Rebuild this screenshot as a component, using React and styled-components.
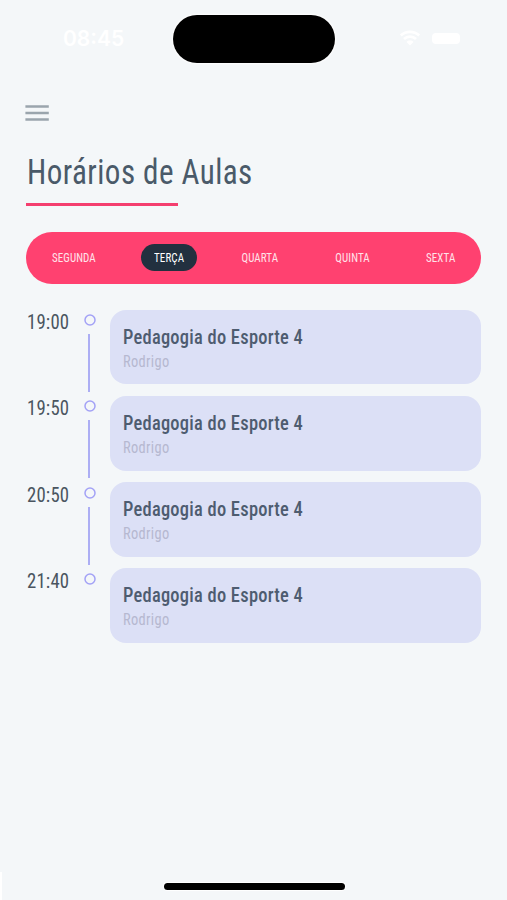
import React, { useState } from 'react';
import styled, { createGlobalStyle } from 'styled-components';

const GlobalStyle = createGlobalStyle`
  * {
    box-sizing: border-box;
  }

  body {
    margin: 0;
    background: #f4f7f9;
    font-family: Roboto, 'Liberation Sans', sans-serif;
    font-stretch: 75%;
  }
`;

const Screen = styled.div`
  position: relative;
  display: flex;
  flex-direction: column;
  height: 900px;
  overflow: hidden;
  background: #f4f7f9;
`;

const StatusBar = styled.div`
  display: grid;
  grid-template-columns: 173px 162px 1fr;
  height: 48px;
  margin-top: 15px;
  color: #ffffff;
`;

const Clock = styled.span`
  padding: 11px 0 0 63px;
  font-family: Inter, sans-serif;
  font-stretch: 100%;
  font-size: 21px;
  font-weight: 600;
  line-height: 26px;
`;

const Island = styled.div`
  border-radius: 24px;
  background: #000000;
  box-shadow: 0 0 2px 1px #ffffff;
`;

const StatusIcons = styled.div`
  display: flex;
  align-items: flex-start;
  gap: 12px;
  padding: 15px 0 0 65px;
`;

const Battery = styled.div`
  width: 28px;
  height: 11px;
  margin-top: 3px;
  border-radius: 4px;
  background: #ffffff;
`;

const Content = styled.main`
  flex: 1;
  padding: 42px 26px 0;
`;

const MenuButton = styled.button`
  display: block;
  width: 24px;
  height: 17px;
  margin-left: -1px;
  padding: 0;
  border: 0;
  background: none;
  cursor: pointer;
`;

/* Squeezes the face a little more than its condensed width allows */
const Narrow = styled.span`
  display: inline-block;
  white-space: nowrap;
  letter-spacing: ${(props) => props.$spacing || 0}px;
  transform: scaleX(${(props) => props.$scale || 0.9});
  transform-origin: ${(props) => props.$origin || 'left'};
`;

const Title = styled.h1`
  margin: 28px 0 0 0.5px;
  font-size: 34.5px;
  font-weight: 430;
  line-height: 44px;
  color: #4a5a69;
`;

const TitleLine = styled.div`
  width: 152px;
  height: 3px;
  margin: 9px 0 0 0.4px;
  background: #f43f6f;
`;

const Days = styled.nav`
  display: flex;
  align-items: center;
  justify-content: space-between;
  height: 52.5px;
  margin: 25.5px 0 0 0.4px;
  padding: 0 13px 1px 13px;
  border-radius: 27px;
  background: #ff4170;
`;

const Day = styled.button`
  display: flex;
  align-items: center;
  justify-content: center;
  width: ${(props) => props.$width}px;
  height: 27.5px;
  padding: 0;
  border: 0;
  border-radius: 14px;
  background: ${(props) => (props.$active ? '#22303f' : 'transparent')};
  color: ${(props) => (props.$active ? '#ffffff' : '#ffe3ea')};
  font-family: inherit;
  font-stretch: inherit;
  font-size: 12.5px;
  font-weight: 430;
  cursor: pointer;
`;

const Schedule = styled.ul`
  display: flex;
  flex-direction: column;
  gap: 11.5px;
  margin: 25.5px 0 0;
  padding: 0;
  list-style: none;
`;

const Row = styled.li`
  display: grid;
  grid-template-columns: 58px 11.5px 1fr;
  grid-template-rows: 74.8px;
  height: 74.8px;
`;

const Time = styled.time`
  padding: 1.5px 0 0 0.5px;
  font-size: 19.5px;
  font-weight: 440;
  line-height: 24px;
  color: #4a5560;
`;

const Track = styled.div`
  display: flex;
  flex-direction: column;
  align-items: center;
  padding-top: 4.5px;
`;

const Dot = styled.svg`
  flex: none;
  display: block;
  width: 12px;
  height: 12px;
`;

const Connector = styled.span`
  flex: none;
  width: 2px;
  height: 58px;
  margin-top: 8px;
  margin-right: 1px;
  background: #acaef4;
`;

const Card = styled.article`
  margin-left: 14.5px;
  padding: 14px 13px 0 12.5px;
  border-radius: 16px;
  background: #dce0f6;
`;

const Subject = styled.h2`
  margin: 0;
  font-size: 20.5px;
  font-weight: 480;
  line-height: 26px;
  color: #4e5c70;
`;

const Teacher = styled.p`
  margin: 1px 0 0;
  font-size: 16px;
  font-weight: 400;
  line-height: 22px;
  color: #b6b8d0;
`;

const HomeIndicator = styled.div`
  align-self: center;
  width: 181px;
  height: 7px;
  margin: 0 0 10px 1px;
  border-radius: 4px;
  background: #000000;
  box-shadow: 0 0 1px 1px #ffffff;
`;

const EdgeMark = styled.span`
  position: absolute;
  left: 0;
  bottom: 0;
  width: 2px;
  height: 28px;
  background: #ffffff;
`;

const days = [
  { label: 'SEGUNDA', width: 69 },
  { label: 'TERÇA', width: 56 },
  { label: 'QUARTA', width: 61 },
  { label: 'QUINTA', width: 58 },
  { label: 'SEXTA', width: 54 },
];

const lessons = [
  { time: '19:00', subject: 'Pedagogia do Esporte 4', teacher: 'Rodrigo' },
  { time: '19:50', subject: 'Pedagogia do Esporte 4', teacher: 'Rodrigo' },
  { time: '20:50', subject: 'Pedagogia do Esporte 4', teacher: 'Rodrigo' },
  { time: '21:40', subject: 'Pedagogia do Esporte 4', teacher: 'Rodrigo' },
];

function WifiIcon() {
  return (
    <svg width="20" height="16" viewBox="0 0 20 16" fill="none">
      <path
        d="M.8 5.4C6 .6 14 .6 19.2 5.4M4 9c3.3-3.1 8.7-3.1 12 0"
        stroke="#fff"
        strokeWidth="2.7"
      />
      <path d="M10 15.6 6.5 11.9c1.9-1.8 5.1-1.8 7 0z" fill="#fff" />
    </svg>
  );
}

function MenuIcon() {
  return (
    <svg width="24" height="17" viewBox="0 0 24 17" display="block">
      <path
        d="M.4 1.5h23.4M.4 8h23.4M.4 14.5h23.4"
        stroke="#9aa5ad"
        strokeWidth="2.4"
      />
    </svg>
  );
}

function Lesson({ time, subject, teacher, last }) {
  return (
    <Row>
      <Time>
        <Narrow $spacing={0.2} $scale={0.96}>
          {time}
        </Narrow>
      </Time>
      <Track>
        <Dot viewBox="0 0 12 12">
          <circle
            cx="6"
            cy="6"
            r="5"
            fill="none"
            stroke="#a3a2f6"
            strokeWidth="1.5"
          />
        </Dot>
        {!last && <Connector />}
      </Track>
      <Card>
        <Subject>
          <Narrow $spacing={0.28}>{subject}</Narrow>
        </Subject>
        <Teacher>
          <Narrow $spacing={0.4}>{teacher}</Narrow>
        </Teacher>
      </Card>
    </Row>
  );
}

const App = () => {
  const [activeDay, setActiveDay] = useState('TERÇA');

  return (
    <Screen>
      <GlobalStyle />
      <StatusBar>
        <Clock>08:45</Clock>
        <Island />
        <StatusIcons>
          <WifiIcon />
          <Battery />
        </StatusIcons>
      </StatusBar>
      <Content>
        <MenuButton aria-label="Menu">
          <MenuIcon />
        </MenuButton>
        <Title>
          <Narrow $spacing={0.5}>Horários de Aulas</Narrow>
        </Title>
        <TitleLine />
        <Days>
          {days.map(({ label, width }) => (
            <Day
              key={label}
              $width={width}
              $active={label === activeDay}
              onClick={() => setActiveDay(label)}
            >
              <Narrow $spacing={0.1} $scale={0.88} $origin="center">
                {label}
              </Narrow>
            </Day>
          ))}
        </Days>
        <Schedule>
          {lessons.map((lesson, index) => (
            <Lesson
              key={lesson.time}
              {...lesson}
              last={index === lessons.length - 1}
            />
          ))}
        </Schedule>
      </Content>
      <HomeIndicator />
      <EdgeMark />
    </Screen>
  );
};

export default App;
